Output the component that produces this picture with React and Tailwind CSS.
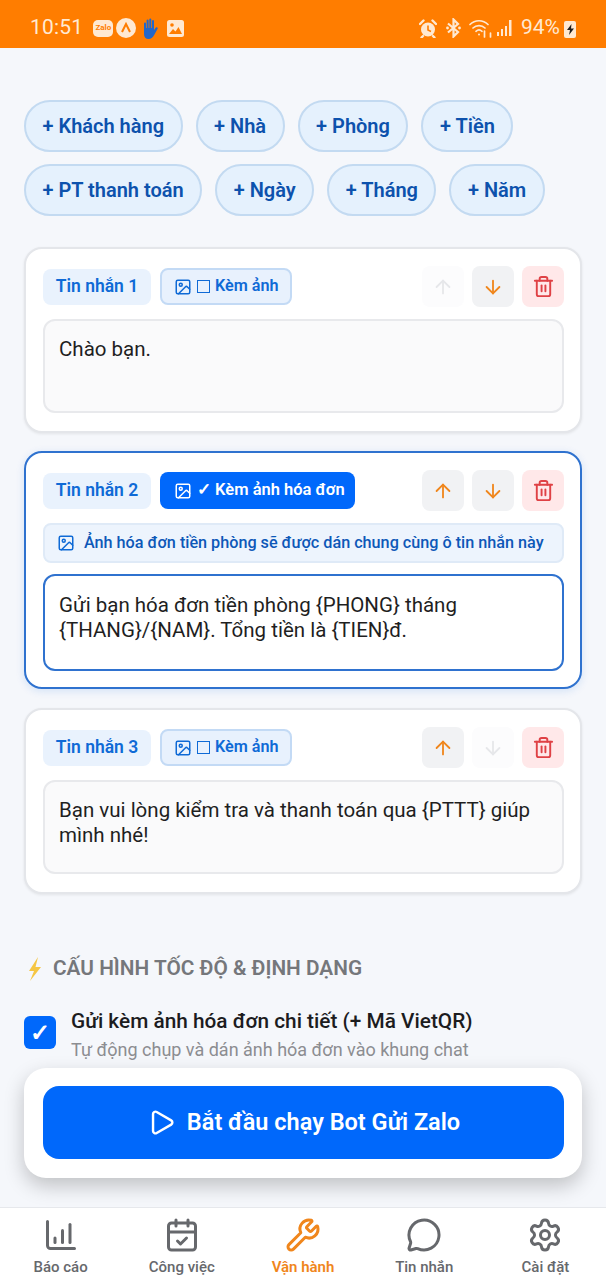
import { ArrowDown, ArrowUp, CalendarCheck, ChartColumnIncreasing, Image, MessageCircle, Play, Settings, Trash2, Wrench } from "lucide-react";

const chipRows = [
  ["+ Khách hàng", "+ Nhà", "+ Phòng", "+ Tiền"],
  ["+ PT thanh toán", "+ Ngày", "+ Tháng", "+ Năm"],
];

const navItems = [
  { label: "Báo cáo", Icon: ChartColumnIncreasing },
  { label: "Công việc", Icon: CalendarCheck },
  { label: "Vận hành", Icon: Wrench, active: true },
  { label: "Tin nhắn", Icon: MessageCircle },
  { label: "Cài đặt", Icon: Settings },
];

function StatusBar() {
  return (
    <div className="h-12 shrink-0 bg-[#ff7d00] flex items-center justify-between pt-2 pl-[30px] pr-[30px] text-[#ffe9d2]">
      <div className="flex items-center">
        <span className="text-[21px] tracking-[0.2px] mr-[10px]">10:51</span>
        {/* Zalo notification */}
        <span className="w-[20px] h-[17px] rounded-[5px] bg-[#ffe9d2] text-[#ff7d00] text-[8px] font-bold flex items-center justify-center mr-[3px]">Zalo</span>
        <span className="w-[20px] h-[20px] rounded-full bg-[#ffe9d2] flex items-center justify-center mr-[5px]">
          <svg className="w-3 h-3" viewBox="0 0 12 12" fill="none" stroke="#ff7d00" strokeWidth={2}>
            <path d="M2 10 6 2l4 8" />
          </svg>
        </span>
        <svg className="w-[18px] h-[21px] mr-[8px]" viewBox="0 0 18 21" fill="#2467c8">
          <path d="M3 5.5a1 1 0 0 1 2 0V10h.6V2.5a1 1 0 0 1 2 0V10h.7V1.5a1 1 0 0 1 2 0V10h.7V3a1 1 0 0 1 2 0v9l1.6-2.2c1.3-1.2 2.8 0 1.9 1.3l-3.2 5.6C11.6 19.6 10 21 7.6 21 4.6 21 3 19 3 16z" />
        </svg>
        <svg className="w-[17px] h-[17px]" viewBox="0 0 17 17">
          <rect width="17" height="17" rx="2.5" fill="#ffe9d2" />
          <circle cx="5" cy="5" r="1.8" fill="#ff7d00" />
          <path d="M2 14l4-5 2.5 2.5L11.5 7 15 14z" fill="#ff7d00" />
        </svg>
      </div>
      <div className="flex items-center">
        {/* alarm */}
        <svg className="w-[18px] h-[19px] mr-[8px]" viewBox="0 0 18 19">
          <path d="M1 5 4.500 1.500M17 5l-3.500-3.500M4 17l-1.500 1.500M14 17l1.500 1.500" stroke="#ffe9d2" strokeWidth={2.4} strokeLinecap="round" />
          <circle cx="9" cy="10.500" r="7" fill="#ffe9d2" />
          <path d="M9 6.500v4.500l3 1.500" fill="none" stroke="#ff7d00" strokeWidth={1.6} />
        </svg>
        {/* bluetooth */}
        <svg className="w-[17px] h-[20px] mr-[7px]" viewBox="0 0 17 20" fill="none" stroke="currentColor" strokeWidth={2.2}>
          <path d="M3 5.500 13 14l-4.500 4.500v-17L13 6 3 14.500" />
          <circle cx="2.500" cy="10" r="1.400" fill="currentColor" stroke="none" />
          <circle cx="14.500" cy="10" r="1.400" fill="currentColor" stroke="none" />
        </svg>
        <svg className="w-[24px] h-[20px] mr-[3px]" viewBox="0 0 24 20" fill="none" stroke="currentColor" strokeWidth={1.7} strokeLinecap="round">
          <path d="M1 6.500c5-5 13-5 18 0M4 10c3.300-3.200 8.700-3.200 12 0M7 13.300c1.700-1.500 4.300-1.500 6 0" />
          <path d="M15.500 13v6M21.500 15v4" />
          <circle cx="10" cy="16.500" r="1" fill="currentColor" stroke="none" />
        </svg>
        <svg className="w-[18px] h-[18px] mr-[7px]" viewBox="0 0 18 18" fill="currentColor">
          <rect x="1" y="13" width="2" height="4" />
          <rect x="5" y="10" width="2" height="7" />
          <rect x="9" y="7" width="2" height="10" />
          <rect x="13" y="1" width="2.500" height="16" />
        </svg>
        <span className="text-[21px] mr-[4px]">94%</span>
        <span className="w-[12px] h-[17px] bg-[#ffe9d2] rounded-[2px] flex items-center justify-center mt-[2px]">
          <svg className="w-[9px] h-[11px]" viewBox="0 0 9 11" fill="#1f1f1f">
            <path d="M5.500 0 1 6h3l-1 5 5-6.500H5z" />
          </svg>
        </span>
      </div>
    </div>
  );
}

function MoveButton({ Icon, enabled, label }) {
  return (
    <button
      type="button"
      aria-label={label}
      className={`w-[42px] h-[41px] rounded-lg flex items-center justify-center ${enabled ? "bg-[#f1f2f4] text-[#f0861c]" : "bg-[#fcfcfd] text-[#e6e7ea]"}`}
    >
      <Icon className="w-[22px] h-[22px]" strokeWidth={2} />
    </button>
  );
}

function MessageCard({ index, attached, up, down, text }) {
  return (
    <div
      className={`bg-white rounded-[18px] pl-[17px] pr-[16px] pt-[17px] border-2 ${attached ? "pb-[16px] mb-px border-[#2f72cf] shadow-[0_2px_8px_rgba(0,100,220,0.14)]" : "pb-[18px] border-[#e4e6ea] shadow-[0_1px_3px_rgba(0,0,0,0.08)]"}`}
    >
      <div className="flex items-center h-[41px]">
        <span className="h-[36px] w-[108px] rounded-lg bg-[#e9f2fd] text-[#0f6ad6] text-[17.500px] font-semibold flex items-center justify-center">
          Tin nhắn {index}
        </span>
        {attached ? (
          <span className="ml-[9px] h-[37px] w-[195px] rounded-lg bg-[#0068fb] text-white text-[16.500px] font-semibold flex items-center gap-[5px] pl-[14px]">
            <Image className="w-[18px] h-[18px]" strokeWidth={2} />
            ✓ Kèm ảnh hóa đơn
          </span>
        ) : (
          <span className="ml-[9px] h-[37px] w-[132px] rounded-lg bg-[#e8f1fd] border-2 border-[#c3daf5] text-[#0f6ad6] text-[16.200px] font-semibold flex items-center gap-[5px] pl-[12px]">
            <Image className="w-[18px] h-[18px]" strokeWidth={2} />
            <span className="w-[13px] h-[13px] border-[1.5px] border-[#0f6ad6]" />
            Kèm ảnh
          </span>
        )}
        <div className="ml-auto flex items-center gap-2">
          <MoveButton Icon={ArrowUp} enabled={up} label="Lên" />
          <MoveButton Icon={ArrowDown} enabled={down} label="Xuống" />
          <button type="button" aria-label="Xóa" className="w-[42px] h-[41px] rounded-lg bg-[#ffe8e9] text-[#df4145] flex items-center justify-center">
            <Trash2 className="w-[23px] h-[23px]" strokeWidth={2} />
          </button>
        </div>
      </div>
      {attached && (
        <div className="mt-[12px] h-[40px] rounded-lg bg-[#edf4fd] border-2 border-[#dfeaf7] text-[#0d58b8] text-[16.200px] font-medium flex items-center gap-[9px] pl-[12px] whitespace-nowrap">
          <Image className="w-[18px] h-[18px] text-[#0f6ad6] shrink-0" strokeWidth={2} />
          Ảnh hóa đơn tiền phòng sẽ được dán chung cùng ô tin nhắn này
        </div>
      )}
      <div
        className={`rounded-xl px-[14px] text-[20.500px] leading-[25px] text-[#1f1f1f] border-2 ${attached ? "mt-[11px] h-[97px] pt-[17px] bg-white border-[#2f72cf]" : "mt-[12px] h-[94px] pt-[16px] bg-[#fafafb] border-[#e8e9ec]"}`}
      >
        {text}
      </div>
    </div>
  );
}

export default function App() {
  return (
    <div className="w-[606px] h-[1280px] flex flex-col bg-[#f5f7fb] font-['Roboto',sans-serif] overflow-hidden">
      <StatusBar />

      <div className="relative flex-1 min-h-0 overflow-hidden">
        <div className="px-6 pt-[52px]">
          {/* Variable chips */}
          <div className="flex flex-col gap-3">
            {chipRows.map((row) => (
              <div key={row[0]} className="flex gap-[13px]">
                {row.map((chip) => (
                  <span key={chip} className="h-[52px] px-[16.500px] rounded-full bg-[#e5f1fd] border-2 border-[#c3daf1] text-[#0d52ad] text-[20px] font-semibold flex items-center whitespace-nowrap">
                    {chip}
                  </span>
                ))}
              </div>
            ))}
          </div>

          {/* Messages */}
          <div className="mt-[31px] flex flex-col gap-[18px]">
            <MessageCard index={1} down text="Chào bạn." />
            <MessageCard index={2} attached up down text="Gửi bạn hóa đơn tiền phòng {PHONG} tháng {THANG}/{NAM}. Tổng tiền là {TIEN}đ." />
            <MessageCard index={3} up text="Bạn vui lòng kiểm tra và thanh toán qua {PTTT} giúp mình nhé!" />
          </div>

          {/* Settings */}
          <div className="mt-[59px] flex items-center gap-[10px] pl-[3px]">
            <svg className="w-[16px] h-[24px]" viewBox="0 0 16 24" fill="#f5c644">
              <path d="M11 0 2 14h5l-4 10 11-14H8.500z" />
            </svg>
            <span className="text-[20.800px] font-semibold text-[#75777b]">CẤU HÌNH TỐC ĐỘ &amp; ĐỊNH DẠNG</span>
          </div>
          <div className="mt-[24px] flex gap-[15px]">
            <span className="w-[32px] h-[33px] mt-[8px] rounded-md bg-[#0068fb] text-white text-[24px] font-semibold flex items-center justify-center">✓</span>
            <div>
              <p className="text-[20.800px] font-medium text-[#1c1c1e] leading-[26px]">Gửi kèm ảnh hóa đơn chi tiết (+ Mã VietQR)</p>
              <p className="text-[18px] text-[#8c8d91] leading-[24px] mt-[4px]">Tự động chụp và dán ảnh hóa đơn vào khung chat</p>
            </div>
          </div>
        </div>

        {/* Floating start button */}
        <div className="absolute left-6 right-6 bottom-[29px] h-[110px] bg-white rounded-[22px] shadow-[0_8px_20px_rgba(0,0,0,0.22)] pl-[19px] pr-[18px] pt-[18px]">
          <button type="button" className="w-full h-[73px] rounded-2xl bg-[#0068fb] text-white text-[23.500px] font-semibold flex items-center justify-center gap-[11px]">
            <Play className="w-[29px] h-[29px]" strokeWidth={2} />
            Bắt đầu chạy Bot Gửi Zalo
          </button>
        </div>
      </div>

      {/* Bottom nav */}
      <nav className="h-[73px] shrink-0 bg-white border-t border-[#e6e8ec] flex">
        {navItems.map(({ label, Icon, active }) => (
          <div key={label} className={`flex-1 flex flex-col items-center pt-[9px] ${active ? "text-[#f0861c]" : "text-[#66686c]"}`}>
            <Icon className="w-[36px] h-[36px]" strokeWidth={2} />
            <span className={`text-[15px] mt-[3px] ${active ? "font-semibold" : "font-medium"}`}>{label}</span>
          </div>
        ))}
      </nav>
    </div>
  );
}
